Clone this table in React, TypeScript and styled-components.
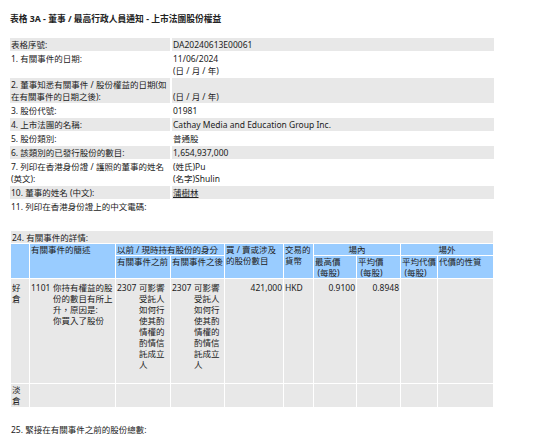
import React from 'react';
import styled, { createGlobalStyle } from 'styled-components';

const GlobalStyle = createGlobalStyle`
  html, body { background: #ffffff; }
  body {
    margin: 8px;
    font-family: "Noto Sans", "Noto Sans CJK TC", sans-serif;
    font-size: 8.5px;
    line-height: 11px;
    color: #222222;
  }
`;

const Title = styled.h1`
  margin: 6px 0 0 2px;
  font-size: 8.75px;
  line-height: 11px;
  font-weight: bold;
`;

const InfoTable = styled.table`
  margin-top: 12.3px;
  width: 488px;
  table-layout: fixed;
  border-collapse: separate;
  border-spacing: 2px 1px;
  line-height: 12px;
`;

const InfoRow = styled.tr`
  height: 13px;
`;

const InfoCell = styled.td<{ $shaded?: boolean }>`
  padding: 1px 1px 0;
  vertical-align: top;
  background: ${(p) => (p.$shaded ? '#e8e8e8' : 'transparent')};
`;

const Line = styled.div`
  min-height: 12px;
`;

const Name = styled.span`
  text-decoration: underline;
`;

const DetailTable = styled.table`
  margin: 15.7px 0 0 2px;
  width: 484px;
  table-layout: fixed;
  border-collapse: separate;
  border-spacing: 1px;
  background: #ffffff;
`;

const SectionCell = styled.td`
  padding: 1px 1px 0;
  height: 11px;
  background: #e8e8e8;
`;

const HeadCell = styled.th<{ $center?: boolean }>`
  padding: 0 1px;
  font-weight: normal;
  text-align: ${(p) => (p.$center ? 'center' : 'left')};
  vertical-align: top;
  background: #99ccff;
  white-space: nowrap;
`;

const HeadWrap = styled(HeadCell)`
  white-space: normal;
`;

const Indent = styled.span`
  padding-left: 2.5px;
`;

const DataRow = styled.tr<{ $height: number }>`
  height: ${(p) => p.$height}px;
`;

const DataCell = styled.td<{ $num?: boolean; $top?: number }>`
  padding: ${(p) => p.$top ?? 0}px 1px 0;
  vertical-align: top;
  text-align: ${(p) => (p.$num ? 'right' : 'left')};
  background: #e8e8e8;
`;

const Entry = styled.div`
  display: flex;
  gap: 2.5px;
`;

const Code = styled.span`
  flex: none;
`;

const Desc = styled.span<{ $nowrap?: boolean }>`
  flex: 1;
  min-width: 0;
  white-space: ${(p) => (p.$nowrap ? 'nowrap' : 'normal')};
`;

const Footer = styled.p`
  margin: 16.5px 0 0 3px;
`;

type Info = { label: string; value: React.ReactNode[] };

const rows: Info[] = [
  { label: '表格序號:', value: ['DA20240613E00061'] },
  { label: '1. 有關事件的日期:', value: ['11/06/2024', '(日 / 月 / 年)'] },
  {
    label: '2. 董事知悉有關事件 / 股份權益的日期(如在有關事件的日期之後):',
    value: ['', '(日 / 月 / 年)'],
  },
  { label: '3. 股份代號:', value: ['01981'] },
  { label: '4. 上市法團的名稱:', value: ['Cathay Media and Education Group Inc.'] },
  { label: '5. 股份類別:', value: ['普通股'] },
  { label: '6. 該類別的已發行股份的數目:', value: ['1,654,937,000'] },
  {
    label: '7. 列印在香港身份證 / 護照的董事的姓名(英文):',
    value: ['(姓氏)Pu', '(名字)Shulin'],
  },
  { label: '10. 董事的姓名 (中文):', value: [<Name key="n">蒲樹林</Name>] },
];

const widths = [18, 85, 54, 53, 58, 29, 42, 43, 36, 55];

const capacity = '可影響受託人如何行使其酌情權的酌情信託成立人';

export default function App() {
  return (
    <>
      <GlobalStyle />
      <Title>表格 3A - 董事 / 最高行政人員通知 - 上市法團股份權益</Title>

      <InfoTable>
        <colgroup>
          <col style={{ width: 160 }} />
          <col style={{ width: 322 }} />
        </colgroup>
        <tbody>
          {rows.map((r, i) => (
            <InfoRow key={r.label}>
              <InfoCell $shaded={i % 2 === 0}>{r.label}</InfoCell>
              <InfoCell $shaded={i % 2 === 0}>
                {r.value.map((v, j) => (
                  <Line key={j}>{v}</Line>
                ))}
              </InfoCell>
            </InfoRow>
          ))}
          <InfoRow>
            <InfoCell colSpan={2}>11. 列印在香港身份證上的中文電碼:</InfoCell>
          </InfoRow>
        </tbody>
      </InfoTable>

      <DetailTable>
        <colgroup>
          {widths.map((w, i) => (
            <col key={i} style={{ width: w }} />
          ))}
        </colgroup>
        <tbody>
          <tr>
            <SectionCell colSpan={10}>24. 有關事件的詳情:</SectionCell>
          </tr>
          <tr>
            <HeadCell rowSpan={2} />
            <HeadCell rowSpan={2}>有關事件的簡述</HeadCell>
            <HeadCell colSpan={2}>以前 / 現時持有股份的身分</HeadCell>
            <HeadWrap rowSpan={2}>買 / 賣或涉及的股份數目</HeadWrap>
            <HeadWrap rowSpan={2}>交易的貨幣</HeadWrap>
            <HeadCell colSpan={2} $center>
              場內
            </HeadCell>
            <HeadCell colSpan={2} $center>
              場外
            </HeadCell>
          </tr>
          <tr>
            <HeadCell>有關事件之前</HeadCell>
            <HeadCell>有關事件之後</HeadCell>
            <HeadCell>
              最高價
              <br />
              <Indent>(每股)</Indent>
            </HeadCell>
            <HeadCell>
              平均價
              <br />
              <Indent>(每股)</Indent>
            </HeadCell>
            <HeadCell>
              平均代價
              <br />
              <Indent>(每股)</Indent>
            </HeadCell>
            <HeadCell>代價的性質</HeadCell>
          </tr>
          <DataRow $height={104}>
            <DataCell $top={3}>好倉</DataCell>
            <DataCell $top={3}>
              <Entry>
                <Code>1101</Code>
                <Desc $nowrap>
                  你持有權益的股
                  <br />
                  份的數目有所上
                  <br />
                  升，原因是:
                  <br />
                  你買入了股份
                </Desc>
              </Entry>
            </DataCell>
            <DataCell $top={3}>
              <Entry>
                <Code>2307</Code>
                <Desc>{capacity}</Desc>
              </Entry>
            </DataCell>
            <DataCell $top={3}>
              <Entry>
                <Code>2307</Code>
                <Desc>{capacity}</Desc>
              </Entry>
            </DataCell>
            <DataCell $top={3} $num>
              421,000
            </DataCell>
            <DataCell $top={3}>HKD</DataCell>
            <DataCell $top={3} $num>
              0.9100
            </DataCell>
            <DataCell $top={3} $num>
              0.8948
            </DataCell>
            <DataCell $top={3} />
            <DataCell $top={3} />
          </DataRow>
          <DataRow $height={23}>
            <DataCell>淡倉</DataCell>
            <DataCell />
            <DataCell />
            <DataCell />
            <DataCell />
            <DataCell />
            <DataCell />
            <DataCell />
            <DataCell />
            <DataCell />
          </DataRow>
        </tbody>
      </DetailTable>

      <Footer>25. 緊接在有關事件之前的股份總數:</Footer>
    </>
  );
}
